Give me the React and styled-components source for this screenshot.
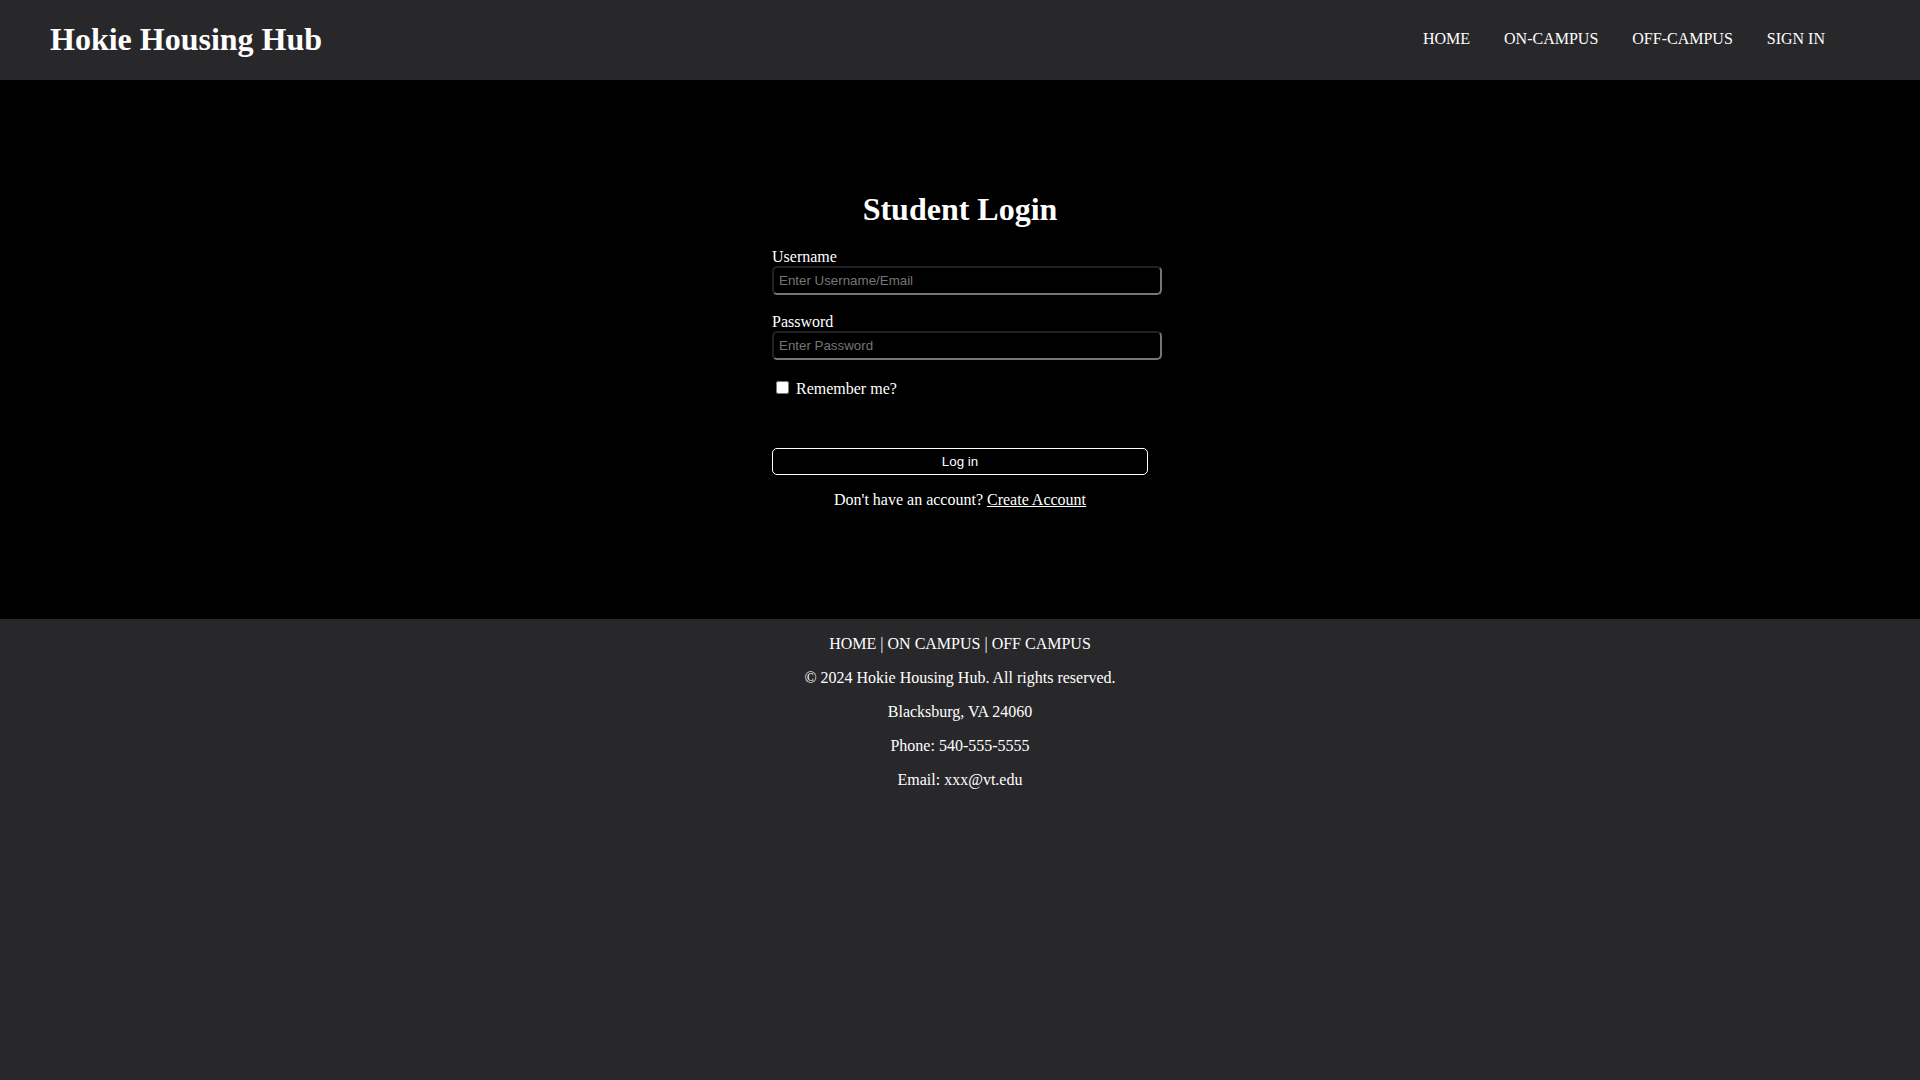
import React from "react";
import styled, { createGlobalStyle } from "styled-components";

const GlobalStyle = createGlobalStyle`
  body {
    margin: 0;
    background: #28282b;
    color: #fff;
    font-family: "Liberation Serif", "Times New Roman", serif;
    font-size: 16px;
    line-height: 18px;
  }
`;

const Header = styled.header`
  display: flex;
  flex-wrap: wrap;
  align-items: center;
  justify-content: space-between;
  min-height: 78px;
  padding: 0 95px 2px 50px;
  background: #28282b;
`;

const Title = styled.h1`
  margin: 0;
  font-size: 32px;
  line-height: 38px;
  text-align: ${(p) => (p.$centered ? "center" : "left")};
`;

const NavList = styled.ul`
  display: flex;
  flex-wrap: wrap;
  gap: 34px;
  margin: 0;
  padding: 0;
  list-style: none;
`;

const PlainLink = styled.a`
  color: #fff;
  text-decoration: ${(p) => (p.$underlined ? "underline" : "none")};
`;

const Main = styled.main`
  display: flex;
  justify-content: center;
  padding: 110px 24px;
  background: #000;
`;

const LoginForm = styled.form`
  display: flex;
  flex-direction: column;
  width: 100%;
  max-width: 376px;
`;

const Fields = styled.div`
  display: flex;
  flex-direction: column;
  gap: 18px;
  margin: 20px 0 50px;
`;

const Field = styled.div`
  display: flex;
  flex-direction: column;
  align-items: flex-start;
`;

const TextInput = styled.input`
  box-sizing: content-box;
  width: 100%;
  height: 15px;
  padding: 5px;
  border: 2px inset #767676;
  border-radius: 5px;
  background: #000;
  color: #fff;
  font-family: "Liberation Sans", Arial, sans-serif;

  &::placeholder {
    color: #757575;
  }
`;

const RememberRow = styled.div`
  display: flex;
  align-items: flex-start;
  gap: 4px;
`;

const Checkbox = styled.input`
  width: 13px;
  height: 13px;
  margin: 3px 3px 0 4px;
`;

const RememberLabel = styled.label`
  padding-top: 2px;
`;

const SubmitButton = styled.button`
  width: 100%;
  height: 27px;
  padding: 5px;
  border: 1px solid #fff;
  border-radius: 5px;
  background: #000;
  color: #fff;
  font-family: "Liberation Sans", Arial, sans-serif;
  cursor: pointer;
`;

const SignUpNote = styled.p`
  margin: 16px 0 0;
  text-align: center;
`;

const Footer = styled.footer`
  display: flex;
  flex-direction: column;
  gap: 16px;
  padding: 16px;
  text-align: center;
`;

const FooterLine = styled.p`
  margin: 0;
`;

const navItems = ["HOME", "ON-CAMPUS", "OFF-CAMPUS", "SIGN IN"];

export default function App() {
  return (
    <>
      <GlobalStyle />
      <Header>
        <Title>Hokie Housing Hub</Title>
        <nav>
          <NavList>
            {navItems.map((item) => (
              <li key={item}>
                <PlainLink href="#">{item}</PlainLink>
              </li>
            ))}
          </NavList>
        </nav>
      </Header>
      <Main>
        <LoginForm onSubmit={(e) => e.preventDefault()}>
          <Title $centered>Student Login</Title>
          <Fields>
            <Field>
              <label htmlFor="username">Username</label>
              <TextInput id="username" type="text" placeholder="Enter Username/Email" />
            </Field>
            <Field>
              <label htmlFor="password">Password</label>
              <TextInput id="password" type="password" placeholder="Enter Password" />
            </Field>
            <RememberRow>
              <Checkbox id="remember" type="checkbox" />
              <RememberLabel htmlFor="remember">Remember me?</RememberLabel>
            </RememberRow>
          </Fields>
          <SubmitButton type="submit">Log in</SubmitButton>
          <SignUpNote>
            Don't have an account?{" "}
            <PlainLink href="#" $underlined>Create Account</PlainLink>
          </SignUpNote>
        </LoginForm>
      </Main>
      <Footer>
        <FooterLine>
          <PlainLink href="#">HOME</PlainLink> | <PlainLink href="#">ON CAMPUS</PlainLink> |{" "}
          <PlainLink href="#">OFF CAMPUS</PlainLink>
        </FooterLine>
        <FooterLine>© 2024 Hokie Housing Hub. All rights reserved.</FooterLine>
        <FooterLine>Blacksburg, VA 24060</FooterLine>
        <FooterLine>Phone: 540-555-5555</FooterLine>
        <FooterLine>Email: xxx@vt.edu</FooterLine>
      </Footer>
    </>
  );
}
